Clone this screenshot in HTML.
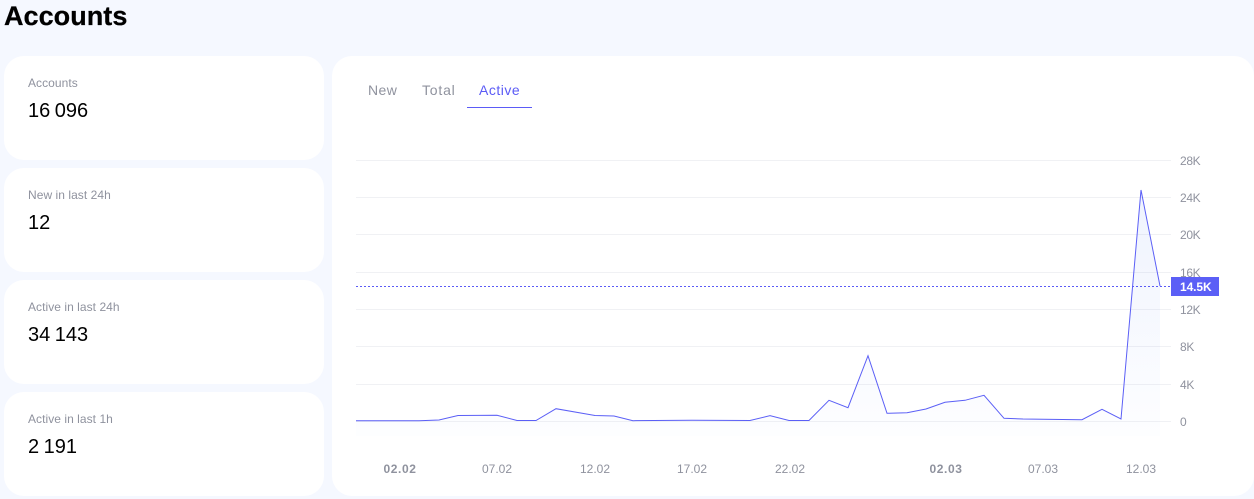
<!DOCTYPE html>
<html><head><meta charset="utf-8"><style>
html,body{margin:0;padding:0}
body{width:1254px;height:499px;overflow:hidden;background:#f5f8ff;position:relative;font-family:"Liberation Sans",sans-serif}
h1{position:absolute;left:4px;top:0;margin:0;font-size:27px;line-height:32px;font-weight:700;color:#000;letter-spacing:.05px;-webkit-text-stroke:.25px #000}
.c{position:absolute;left:4px;width:320px;height:104px;background:#fff;border-radius:20px}
.c span{position:absolute;left:24px;top:20px;font-size:12px;line-height:14px;color:#8f929e;letter-spacing:.05px}
.c b{position:absolute;left:24px;top:43px;font-size:20px;line-height:24px;font-weight:400;color:#000;word-spacing:-1px}
.m{position:absolute;left:332px;top:56px;width:922px;height:440px;background:#fff;border-radius:20px}
.t{position:absolute;top:26px;font-size:14px;line-height:17px;letter-spacing:.4px;color:#8f929e}
svg{position:absolute;left:0;top:0}
svg text{font-family:"Liberation Sans",sans-serif;font-size:12px;fill:#8f929e}
svg .y{letter-spacing:-.35px}
</style></head><body>
<h1>Accounts</h1>
<div class="c" style="top:56px"><span>Accounts</span><b>16 096</b></div>
<div class="c" style="top:168px"><span>New in last 24h</span><b>12</b></div>
<div class="c" style="top:280px"><span>Active in last 24h</span><b>34 143</b></div>
<div class="c" style="top:392px"><span>Active in last 1h</span><b>2 191</b></div>
<div class="m">
<div class="t" style="left:36px">New</div>
<div class="t" style="left:90px;letter-spacing:.8px">Total</div>
<div class="t" style="left:147px;color:#5b5bf6;letter-spacing:.5px">Active</div>
<div style="position:absolute;left:135px;top:51px;width:65px;height:1px;background:#5b5bf6"></div>
</div>
<svg width="1254" height="499" viewBox="0 0 1254 499">
<defs><linearGradient id="g" x1="0" y1="190" x2="0" y2="436" gradientUnits="userSpaceOnUse"><stop offset="0" stop-color="#4c7cf6" stop-opacity=".09"/><stop offset="1" stop-color="#4c7cf6" stop-opacity=".01"/></linearGradient></defs>
<g stroke="#f0f1f4" stroke-width="1">
<path d="M356 160.5H1171M356 197.5H1171M356 234.5H1171M356 272.5H1171M356 309.5H1171M356 346.5H1171M356 384.5H1171M356 421.5H1171"/>
</g>
<path fill="url(#g)" d="M356 420.7L419 420.7L439 420L458 415.5L497 415.3L517 420.5L536 420.5L556 408.7L595 415.5L614 416L633 420.7L692 420.3L750 420.5L770 415.7L789 420.5L809 420.5L829 400.3L848 407.7L868 355.7L887 413.3L907 412.7L926 409L945 402.3L965 400.3L984 395.3L1004 418.3L1023 419L1082 419.7L1102 409.3L1121 419L1141 190L1160 286V436H356Z"/>
<path fill="none" stroke="#5b5ff6" stroke-width="1" d="M356 420.7L419 420.7L439 420L458 415.5L497 415.3L517 420.5L536 420.5L556 408.7L595 415.5L614 416L633 420.7L692 420.3L750 420.5L770 415.7L789 420.5L809 420.5L829 400.3L848 407.7L868 355.7L887 413.3L907 412.7L926 409L945 402.3L965 400.3L984 395.3L1004 418.3L1023 419L1082 419.7L1102 409.3L1121 419L1141 190L1160 286"/>
<path d="M356 286.5H1171" stroke="#5b5bf6" stroke-width="1" stroke-dasharray="2 2" fill="none"/>
<text class="y" x="1180" y="165">28K</text>
<text class="y" x="1180" y="202">24K</text>
<text class="y" x="1180" y="239">20K</text>
<text class="y" x="1180" y="277">16K</text>
<text class="y" x="1180" y="314">12K</text>
<text class="y" x="1180" y="351">8K</text>
<text class="y" x="1180" y="389">4K</text>
<text class="y" x="1180" y="426">0</text>
<rect x="1171" y="277" width="48" height="19" fill="#5b5ff6"/>
<text class="y" x="1180" y="291" style="fill:#fff;font-weight:700;letter-spacing:-.1px">14.5K</text>
<text x="383.500" y="473" style="font-weight:700;letter-spacing:.6px">02.02</text>
<text x="482" y="473">07.02</text>
<text x="580" y="473">12.02</text>
<text x="677" y="473">17.02</text>
<text x="775" y="473">22.02</text>
<text x="929.500" y="473" style="font-weight:700;letter-spacing:.6px">02.03</text>
<text x="1028" y="473">07.03</text>
<text x="1126" y="473">12.03</text>
</svg>
</body></html>
